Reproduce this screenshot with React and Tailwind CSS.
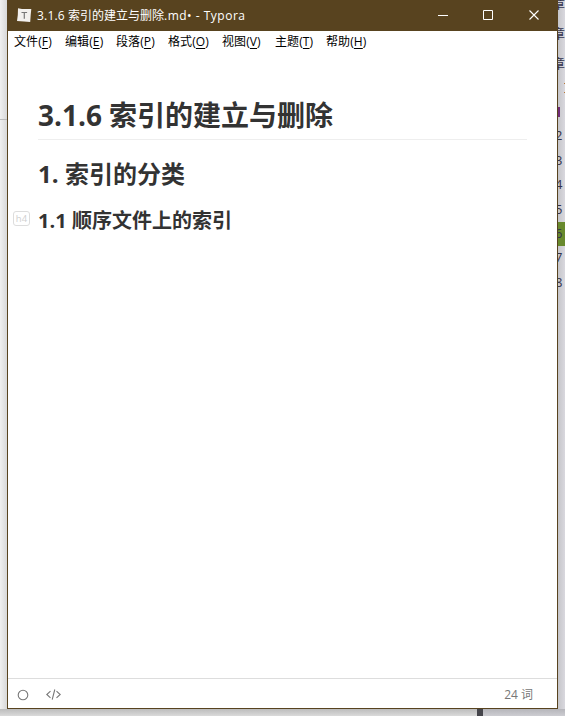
const menus = [
  { label: "文件", key: "F", width: "w-[51px]" },
  { label: "编辑", key: "E", width: "w-[51px]" },
  { label: "段落", key: "P", width: "w-[52px]" },
  { label: "格式", key: "O", width: "w-[54px]" },
  { label: "视图", key: "V", width: "w-[53px]" },
  { label: "主题", key: "T", width: "w-[51px]" },
  { label: "帮助", key: "H", width: "w-[51px]" },
];

const lineNumbers = ["2", "3", "4", "5", "6", "7", "8"];

function TitleBar() {
  return (
    <header className="flex h-[31px] shrink-0 items-center bg-[#58431f] pl-[9px] text-white">
      <svg width="15" height="15" viewBox="0 0 15 15" className="shrink-0">
        <path d="M1 0.3 5 1 14.3 1 13.7 7 13.2 14 7 13.4 0 13 0.8 7Z" fill="#f2f0ee" />
        <path d="M4.5 4.5h5.6M7.3 4.5v6.3" fill="none" stroke="#777" strokeWidth="1.2" />
      </svg>
      <h1 className="ml-[5px] flex h-[18px] whitespace-pre text-[12px] leading-[18px]">
        <span className="w-[31px] tracking-[0.2px]">3.1.6</span>
        <span className="w-[96px]">索引的建立与删除</span>
        <span className="tracking-[0.5px]">.md• - Typora</span>
      </h1>
      <svg width="138" height="31" viewBox="0 0 138 31" className="ml-auto shrink-0" fill="none" stroke="#fff">
        <path d="M19 15.5h10" />
        <path d="M64.5 10.5h9v9h-9z" />
        <path d="m110.5 10.5 9 9m0-9-9 9" strokeWidth="1.1" />
      </svg>
    </header>
  );
}

function MenuBar() {
  return (
    <nav className="flex h-[22px] shrink-0 pl-[6px] text-[12px] leading-[21px] text-black">
      {menus.map((m) => (
        <span key={m.key} className={`${m.width} shrink-0 whitespace-nowrap tracking-[0.1px]`}>
          {m.label}(<span className="underline underline-offset-2">{m.key}</span>)
        </span>
      ))}
    </nav>
  );
}

function Document() {
  return (
    <main className="flex-1 pl-[5px] pr-[30px] font-bold text-[#333]">
      <h1 className="ml-[25px] mt-[43px] flex h-[44px] whitespace-nowrap border-b border-[#eee] text-[28px] leading-[38px]">
        <span className="w-[71px]">3.1.6</span>
        <span>索引的建立与删除</span>
      </h1>
      <h2 className="ml-[25px] mt-[17px] flex h-[34px] whitespace-nowrap text-[24px] leading-[34px]">
        <span className="w-[27px]">1.</span>
        <span>索引的分类</span>
      </h2>
      <div className="mt-[15px] flex h-[28px] items-center">
        <span className="mb-[3px] flex h-[15px] w-[17px] items-center justify-center rounded-[3px] border border-[#ddd] text-[9.5px] font-normal leading-none text-[#d0d0d0]">
          h4
        </span>
        <h4 className="ml-[8px] mt-px flex whitespace-nowrap text-[20px] leading-[28px]">
          <span className="w-[34px]">1.1</span>
          <span>顺序文件上的索引</span>
        </h4>
      </div>
    </main>
  );
}

function StatusBar() {
  return (
    <footer className="flex h-[30px] shrink-0 items-center border-t border-[#ddd] pl-[9px] pr-[24px] text-[12px] text-[#777]">
      <svg width="12" height="12" viewBox="0 0 12 12" className="mt-[3px]" fill="none" stroke="#777" strokeWidth="1.1">
        <circle cx="6" cy="6" r="4.8" />
      </svg>
      <svg width="15" height="12" viewBox="0 0 15 12" className="ml-[17px] mt-[3px]" fill="none" stroke="#777" strokeWidth="1.1">
        <path d="M4.5 2.2.8 5.5l3.7 3.4M10.5 2.2l3.7 3.3-3.7 3.4M8.8.5 6.2 10.7" />
      </svg>
      <span className="ml-auto mt-[2px] whitespace-nowrap leading-[18px]">24 词</span>
    </footer>
  );
}

function BackgroundEditor() {
  return (
    <aside className="flex h-[709px] w-[7px] shrink-0 flex-col overflow-hidden bg-linear-to-r from-[#c6c6ca] to-[#d9d8de] text-[13px] text-[#33334d]">
      <div className="flex h-[78px] shrink-0 flex-col">
        <span className="-ml-[6px] -mt-[12px] h-[30px] leading-[30px]">章</span>
        <span className="-ml-[6px] h-[30px] leading-[30px]">章</span>
        <span className="-ml-[6px] h-[30px] leading-[30px]">章</span>
      </div>
      <div className="flex h-[29px] shrink-0 flex-col items-end justify-between pb-[14px] pt-[5px]">
        <i className="h-px w-px bg-[#b97835]" />
        <i className="h-px w-px bg-[#b97835]" />
      </div>
      <div className="h-[10px] w-[2px] shrink-0 bg-[#702c78]" />
      <div className="mt-[7px] flex flex-col">
        {lineNumbers.map((n) => (
          <span
            key={n}
            className={`flex h-[24.4px] items-center ${n === "6" ? "bg-[#68892d]" : ""}`}
          >
            <span className="-ml-[3px]">{n}</span>
          </span>
        ))}
      </div>
    </aside>
  );
}

export default function App() {
  return (
    <div className="flex h-[716px] w-[565px] flex-col overflow-hidden bg-[#dadada] font-['Open_Sans','Noto_Sans_CJK_SC',sans-serif]">
      <div className="flex h-[709px] shrink-0">
        <aside className="h-[709px] w-[7px] shrink-0 bg-linear-to-r from-[#f0f0f0] to-[#d8d8d8] pt-[119px]">
          <div className="h-px bg-[#bbb]" />
        </aside>
        <section className="flex h-[709px] w-[551px] shrink-0 flex-col border-x border-b border-[#58431f] bg-white">
          <TitleBar />
          <MenuBar />
          <Document />
          <StatusBar />
        </section>
        <BackgroundEditor />
      </div>
      <div className="flex h-[7px] bg-linear-to-b from-[#bcbcbc] to-[#dadada]">
        <div className="ml-[477px] w-[6px] bg-[#45454b]" />
        <div className="flex-1 bg-linear-to-b from-[#b5b5ba] to-[#cdcdd2]" />
      </div>
    </div>
  );
}
